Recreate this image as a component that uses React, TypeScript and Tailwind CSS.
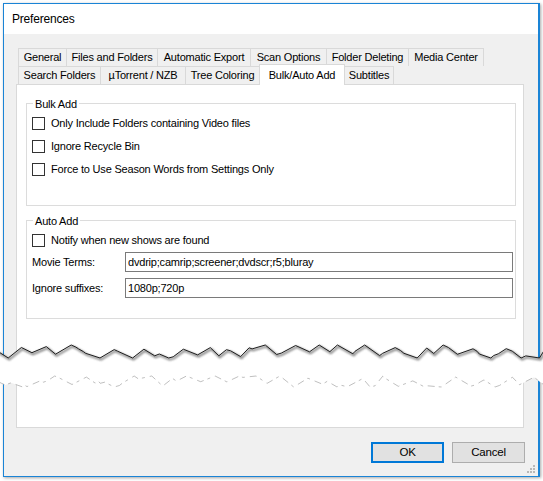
import React from "react";

function rng(seed: number) {
  let s = seed;
  return () => {
    s = (s * 16807) % 2147483647;
    return (s - 1) / 2147483646;
  };
}

function jag(seed: number, yMin: number, yMax: number) {
  const r = rng(seed);
  const pts: [number, number][] = [];
  let x = -2;
  let y = (yMin + yMax) / 2;
  let dir = 1;
  while (x < 545) {
    pts.push([x, y]);
    const big = r() < 0.6;
    x += big ? 7 + r() * 9 : 2 + r() * 4;
    y += dir * (big ? 5 + r() * 6 : 1 + r() * 2);
    if (y > yMax) { y = yMax; }
    if (y < yMin) { y = yMin; }
    if (big || r() < 0.3) dir = -dir;
    if (y >= yMax) dir = -1;
    if (y <= yMin) dir = 1;
  }
  pts.push([545, y]);
  return pts;
}

const upper = jag(24680, 7, 20);
const lower = jag(98765, 38, 49);
const toPath = (p: [number, number][]) =>
  p.map((q, i) => `${i ? "L" : "M"}${q[0].toFixed(1)} ${q[1].toFixed(1)}`).join(" ");
const fillPath =
  toPath(upper) +
  " " +
  [...lower].reverse().map((q) => `L${q[0].toFixed(1)} ${q[1].toFixed(1)}`).join(" ") +
  " Z";

const Tab = ({ w, label, last }: { w: string; label: string; last?: boolean }) => (
  <div
    className={`${w} h-[18px] border-t border-l ${last ? "border-r" : ""} border-[#d9d9d9] flex items-center justify-center whitespace-nowrap`}
  >
    {label}
  </div>
);

const Check = ({ label }: { label: string }) => (
  <div className="h-[23px] flex items-center">
    <div className="w-[13px] h-[13px] border border-[#333333] bg-white" />
    <span className="ml-[6px] whitespace-nowrap">{label}</span>
  </div>
);

export default function App() {
  return (
    <div
      className="w-[543px] h-[481px] bg-white relative overflow-hidden text-[11px] tracking-[-0.2px] text-black"
      style={{ fontFamily: '"Liberation Sans", Arial, sans-serif' }}
    >
      <div className="ml-[3px] mt-[3px] w-[537px] h-[474px] border-l border-t border-b border-r-2 border-[#1a84d6] bg-[#f0f0f0] flex flex-col shadow-[1px_1px_3px_rgba(0,0,0,0.35)] relative">
        {/* Title bar */}
        <div className="h-[30px] bg-white flex items-center pl-[8px] text-[12px] tracking-[-0.2px]">
          Preferences
        </div>
        {/* Body */}
        <div className="flex-1 flex flex-col pt-[14px]">
          <div className="ml-[14px] flex">
            <Tab w="w-[48px]" label="General" />
            <Tab w="w-[91px]" label="Files and Folders" />
            <Tab w="w-[93px]" label="Automatic Export" />
            <Tab w="w-[76px]" label="Scan Options" />
            <Tab w="w-[82px]" label="Folder Deleting" />
            <Tab w="w-[76px]" label="Media Center" last />
          </div>
          <div className="ml-[14px] flex items-start h-[18px]">
            <Tab w="w-[82px]" label="Search Folders" />
            <Tab w="w-[85px]" label="µTorrent / NZB" />
            <Tab w="w-[74px]" label="Tree Coloring" />
            <div className="relative z-10 -mt-[2px] w-[86px] h-[21px] border-t border-l border-r border-[#d9d9d9] bg-white flex items-start pt-[2px] justify-center whitespace-nowrap">
              Bulk/Auto Add
            </div>
            <div className="w-[49px] h-[18px] border-t border-r border-[#d9d9d9] flex items-center justify-center">
              Subtitles
            </div>
          </div>
          {/* Panel */}
          <div className="ml-[12px] w-[508px] h-[344px] border border-[#d9d9d9] bg-white flex flex-col">
            {/* Bulk Add */}
            <div className="relative ml-[9px] mt-[18px] w-[490px] h-[103px] border border-[#dcdcdc] pl-[5px] pt-[8px] flex flex-col">
              <span className="absolute -top-[8px] left-[6px] bg-white px-[2px]">Bulk Add</span>
              <Check label="Only Include Folders containing Video files" />
              <Check label="Ignore Recycle Bin" />
              <Check label="Force to Use Season Words from Settings Only" />
            </div>
            {/* Auto Add */}
            <div className="relative ml-[9px] mt-[14px] w-[490px] h-[99px] border border-[#dcdcdc] pl-[5px] pt-[8px] flex flex-col">
              <span className="absolute -top-[8px] left-[6px] bg-white px-[2px]">Auto Add</span>
              <Check label="Notify when new shows are found" />
              <div className="h-[20px] flex items-center">
                <span className="w-[93px]">Movie Terms:</span>
                <div className="w-[388px] h-[20px] border border-[#7a7a7a] bg-white flex items-center pl-[2px]">
                  dvdrip;camrip;screener;dvdscr;r5;bluray
                </div>
              </div>
              <div className="mt-[6px] h-[20px] flex items-center">
                <span className="w-[93px]">Ignore suffixes:</span>
                <div className="w-[388px] h-[20px] border border-[#7a7a7a] bg-white flex items-center pl-[2px]">
                  1080p;720p
                </div>
              </div>
            </div>
          </div>
          {/* Buttons */}
          <div className="mt-[14px] flex justify-end pr-[13px]">
            <button className="w-[73px] h-[21px] border-2 border-[#0078d7] bg-[#e1e1e1] flex items-center justify-center text-[11.5px]">
              OK
            </button>
            <button className="ml-[8px] w-[73px] h-[21px] border border-[#adadad] bg-[#e1e1e1] flex items-center justify-center text-[11.5px]">
              Cancel
            </button>
          </div>
        </div>
        {/* size grip */}
        <svg className="absolute right-[2px] bottom-[2px]" width="10" height="10" viewBox="0 0 10 10">
          {[
            [7, 1], [4, 4], [7, 4], [1, 7], [4, 7], [7, 7],
          ].map(([x, y], i) => (
            <rect key={i} x={x} y={y} width="2" height="2" fill="#b8b8b8" />
          ))}
        </svg>
      </div>
      {/* torn edge */}
      <svg className="absolute left-0 top-[338px]" width="543" height="52" viewBox="0 0 543 52">
        <defs>
          <filter id="blur" x="-5%" y="-50%" width="110%" height="200%">
            <feGaussianBlur stdDeviation="1" />
          </filter>
        </defs>
        <path d={fillPath} fill="#ffffff" />
        <path d={toPath(upper)} transform="translate(1 1.5)" fill="none" stroke="#444" strokeWidth="1.8" filter="url(#blur)" opacity="0.75" />
        <path d={toPath(upper)} fill="none" stroke="#1e1e1e" strokeWidth="1" />
        <path d={toPath(lower)} fill="none" stroke="#9a9a9a" strokeWidth="0.8" strokeDasharray="7 4 3 5" opacity="0.8" />
      </svg>
    </div>
  );
}
